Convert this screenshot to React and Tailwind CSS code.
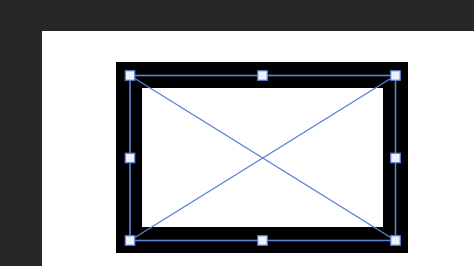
import React from 'react';

const handles = [
    [14, 13.5], [146.5, 13.5], [279.5, 13.5],
    [14, 96], [279.5, 96],
    [14, 178.5], [146.5, 178.5], [279.5, 178.5],
];

function Selection() {
    return (
        <svg className="absolute left-0 top-0 overflow-visible" width="292" height="191" viewBox="0 0 292 191">
            <rect x="14" y="13.5" width="265.5" height="165" fill="none" stroke="#5b80d8" strokeWidth="1.6" />
            <line x1="14" y1="13.5" x2="279.5" y2="178.5" stroke="#5b80d8" strokeWidth="1.4" />
            <line x1="279.5" y1="13.5" x2="14" y2="178.5" stroke="#5b80d8" strokeWidth="1.4" />
            {handles.map(([x, y], i) => (
                <rect key={i} x={x - 4.75} y={y - 4.75} width="9.5" height="9.5" fill="#eef2fc" stroke="#5b80d8" strokeWidth="1.2" />
            ))}
        </svg>
    );
}

export default function App() {
    return (
        <div className="w-[474px] h-[266px] overflow-hidden bg-[#272727] flex flex-col">
            {/* Artboard */}
            <div className="ml-[42px] mt-[31px] flex-1 bg-white pl-[74px] pt-[31px]">
                <div className="relative w-[292px] h-[191px] bg-black p-[26px] pr-[25px]">
                    <div className="w-full h-full bg-white" />
                    <Selection />
                </div>
            </div>
        </div>
    );
}
